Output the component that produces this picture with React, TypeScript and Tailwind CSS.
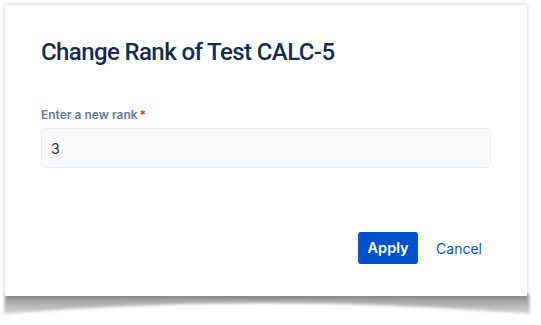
import React from 'react';

const CurlShadow = () => (
  <svg
    className="absolute left-[2px] top-[288px]"
    width="530"
    height="34"
    viewBox="0 0 530 34"
    aria-hidden="true"
  >
    <defs>
      <linearGradient id="curl" x1="0" y1="0" x2="0" y2="1">
        <stop offset="0" stopColor="#8a8a8a" />
        <stop offset="1" stopColor="#d6d6d6" />
      </linearGradient>
      <filter id="soft" x="-5%" y="-50%" width="110%" height="200%">
        <feGaussianBlur stdDeviation="1.6" />
      </filter>
    </defs>
    <path
      d="M3 6 L527 6 L528 26 Q265 4 2 26 Z"
      fill="url(#curl)"
      filter="url(#soft)"
    />
  </svg>
);

export default function App() {
  return (
    <div className="relative h-[325px] w-[541px] overflow-hidden bg-white font-['Inter','Liberation_Sans',sans-serif]">
      <CurlShadow />
      <div className="relative z-10 ml-[5px] mt-[5px] flex h-[291px] w-[522px] flex-col bg-white px-[36px] pt-[33px] shadow-[0_0_4px_rgba(0,0,0,0.22)]">
        <h1 className="font-['Roboto','Liberation_Sans',sans-serif] text-[24px] font-medium leading-[28px] tracking-[-0.025em] text-[#172B4D]">
          Change Rank of Test CALC-5
        </h1>

        <label className="mt-[41px] flex text-[12px] font-semibold leading-[16px] text-[#6B778C]">
          Enter a new rank
          <span className="ml-[2px] text-[#DE350B]">*</span>
        </label>
        <div className="mt-[5px] flex h-[40px] items-center rounded-[4px] border border-[#EEEFF2] bg-[#FAFBFC] px-[9px] text-[14px] text-[#172B4D]">
          3
        </div>

        <div className="mt-[64px] mr-[-3px] flex justify-end gap-[6px]">
          <button
            type="button"
            className="h-[32px] w-[60px] rounded-[3px] bg-[#0052CC] text-[14.5px] font-semibold text-white"
          >
            Apply
          </button>
          <button
            type="button"
            className="h-[32px] rounded-[3px] px-[12px] text-[14px] text-[#0052CC]"
          >
            Cancel
          </button>
        </div>
      </div>
    </div>
  );
}
